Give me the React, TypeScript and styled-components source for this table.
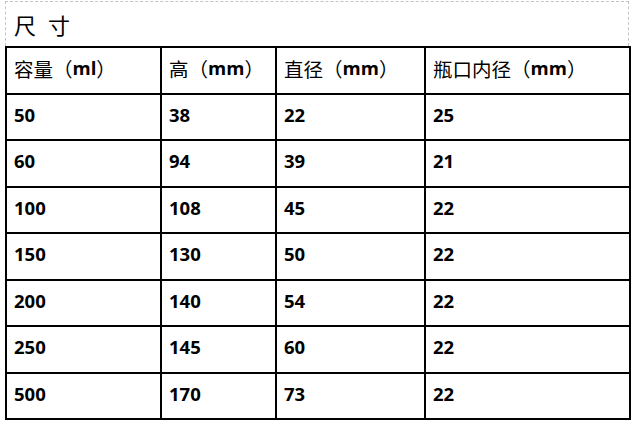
import React from "react";
import styled, { createGlobalStyle } from "styled-components";

const Global = createGlobalStyle`
  html, body { margin: 0; padding: 0; background: #ffffff; }
  body { font-family: "Noto Sans CJK SC", "Noto Sans", sans-serif; color: #000; }
`;

const Page = styled.div`
  padding: 1px 0 0 5px;
  width: 636px;
  box-sizing: border-box;
`;

const TitleBox = styled.div`
  width: 624px;
  height: 45px;
  box-sizing: border-box;
  border: 1px dashed #c4c4c4;
  border-bottom: none;
  display: flex;
  align-items: center;
  padding-left: 8px;
`;

const Title = styled.h1`
  margin: 0;
  font-family: "Noto Sans CJK SC", sans-serif;
  font-weight: 400;
  font-size: 22px;
  line-height: 1;
  word-spacing: 7px;
`;

const Grid = styled.div`
  display: grid;
  grid-template-columns: 153px 113px 147px 203px;
  grid-auto-rows: 44.5px;
  gap: 2px;
  padding: 2px;
  background: #000;
  width: 626px;
  box-sizing: border-box;
`;

const Cell = styled.div<{ $head?: boolean }>`
  background: #fff;
  display: flex;
  align-items: center;
  padding: 0 0 ${(p) => (p.$head ? "4px" : "4px")} 7px;
  line-height: 1;
  font-family: ${(p) =>
    p.$head ? '"Noto Sans CJK SC", sans-serif' : '"Open Sans", "Liberation Sans", sans-serif'};
  font-weight: ${(p) => (p.$head ? 400 : 700)};
  font-size: ${(p) => (p.$head ? "19.5px" : "18.5px")};
  white-space: nowrap;
`;

const Unit = styled.span`
  font-family: "Open Sans", "Liberation Sans", sans-serif;
  font-weight: 700;
  font-size: 18.5px;
`;

const heads: [string, string][] = [
  ["容量", "ml"],
  ["高", "mm"],
  ["直径", "mm"],
  ["瓶口内径", "mm"],
];

const rows = [
  ["50", "38", "22", "25"],
  ["60", "94", "39", "21"],
  ["100", "108", "45", "22"],
  ["150", "130", "50", "22"],
  ["200", "140", "54", "22"],
  ["250", "145", "60", "22"],
  ["500", "170", "73", "22"],
];

export default function App() {
  return (
    <Page>
      <Global />
      <TitleBox>
        <Title>尺 寸</Title>
      </TitleBox>
      <Grid>
        {heads.map(([label, unit]) => (
          <Cell $head key={label}>
            {label}（<Unit>{unit}</Unit>）
          </Cell>
        ))}
        {rows.map((r, i) =>
          r.map((v, j) => <Cell key={`${i}-${j}`}>{v}</Cell>)
        )}
      </Grid>
    </Page>
  );
}
